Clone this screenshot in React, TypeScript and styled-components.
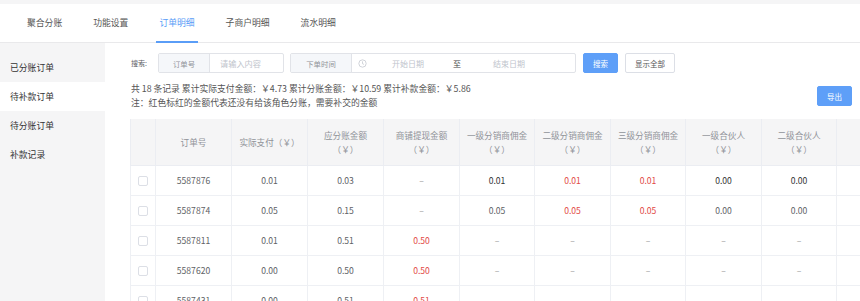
import React from "react";
import styled, { createGlobalStyle } from "styled-components";

const Global = createGlobalStyle`
  html, body { margin: 0; padding: 0; background: #fff; overflow: hidden; }
  body { font-family: "Noto Sans CJK SC", "Noto Sans", sans-serif; color: #606266; }
  * { box-sizing: border-box; }
`;

const Page = styled.div`
  width: 860px;
  height: 301px;
  display: flex;
  flex-direction: column;
  border-top: 4px solid #f5f5f6;
  overflow: hidden;
`;

const TabBar = styled.div`
  height: 39px;
  display: flex;
  align-items: stretch;
  padding-left: 27px;
  gap: 31px;
  border-bottom: 1px solid #e9e9eb;
  flex-shrink: 0;
`;

const Tab = styled.div<{ $active?: boolean }>`
  position: relative;
  display: flex;
  align-items: center;
  font-size: 8.8px;
  color: ${(p) => (p.$active ? "#5a9df7" : "#555")};
  padding-bottom: 1px;
  &::after {
    content: "";
    position: absolute;
    left: -3px;
    right: -3px;
    bottom: -1px;
    height: 2px;
    background: ${(p) => (p.$active ? "#5a9df7" : "transparent")};
  }
`;

const Body = styled.div`
  flex: 1;
  display: flex;
  min-height: 0;
`;

const Sidebar = styled.div`
  width: 105px;
  flex-shrink: 0;
  background: #f5f5f6;
  padding-top: 10px;
  display: flex;
  flex-direction: column;
`;

const SideItem = styled.div<{ $active?: boolean }>`
  height: 29px;
  display: flex;
  align-items: center;
  padding-left: 10px;
  font-size: 8.8px;
  color: #333;
  background: ${(p) => (p.$active ? "#fff" : "transparent")};
`;

const Main = styled.div`
  flex: 1;
  min-width: 0;
  padding: 10px 8px 0 25px;
  display: flex;
  flex-direction: column;
`;

const SearchRow = styled.div`
  display: flex;
  align-items: center;
  height: 20px;
`;

const SearchLabel = styled.span`
  font-size: 7px;
  color: #606266;
  width: 28px;
  padding-left: 1px;
`;

const InputGroup = styled.div<{ $w: number; $ml?: number }>`
  width: ${(p) => p.$w}px;
  margin-left: ${(p) => p.$ml || 0}px;
  height: 20px;
  display: flex;
  border: 1px solid #e1e3e8;
  border-radius: 2px;
  overflow: hidden;
`;

const Prepend = styled.div<{ $w: number }>`
  width: ${(p) => p.$w}px;
  flex-shrink: 0;
  background: #f5f7fa;
  border-right: 1px solid #e1e3e8;
  display: flex;
  align-items: center;
  justify-content: center;
  font-size: 7.4px;
  color: #909399;
`;

const Placeholder = styled.div`
  display: flex;
  align-items: center;
  padding-left: 10px;
  font-size: 8.2px;
  color: #c0c4cc;
`;

const RangeBox = styled.div`
  flex: 1;
  display: flex;
  align-items: center;
  padding-left: 6px;
`;

const RangeField = styled.div<{ $w: number }>`
  width: ${(p) => p.$w}px;
  text-align: center;
  font-size: 8px;
  color: #c0c4cc;
`;

const RangeSep = styled.div`
  width: 16px;
  text-align: center;
  font-size: 8px;
  color: #444;
`;

const Button = styled.button<{ $primary?: boolean; $w: number; $ml?: number }>`
  width: ${(p) => p.$w}px;
  height: 20px;
  margin-left: ${(p) => p.$ml || 0}px;
  padding: 0;
  border-radius: 2px;
  font-family: inherit;
  font-size: 7.5px;
  cursor: pointer;
  border: 1px solid ${(p) => (p.$primary ? "#5e9ff8" : "#dcdfe6")};
  background: ${(p) => (p.$primary ? "#5e9ff8" : "#fff")};
  color: ${(p) => (p.$primary ? "#fff" : "#555")};
`;

const SummaryRow = styled.div`
  display: flex;
  align-items: center;
  justify-content: space-between;
  margin-top: 9px;
  padding-left: 1px;
`;

const SummaryText = styled.div`
  font-size: 8.8px;
  line-height: 14px;
  color: #555;
`;

const TableWrap = styled.div`
  margin-top: 9px;
  margin-right: -8px;
  overflow: hidden;
`;

const Table = styled.table`
  border-collapse: collapse;
  table-layout: fixed;
  width: 786px;
`;

const Th = styled.th`
  background: #f5f5f6;
  height: 46px;
  padding: 0;
  font-weight: normal;
  font-size: 8.6px;
  line-height: 14px;
  color: #909399;
  text-align: center;
  border: 1px solid #ebedf2;
  border-top: none;
`;

const Unit = styled.span`
  display: block;
`;

const Td = styled.td<{ $red?: boolean; $dash?: boolean; $dark?: boolean }>`
  height: 30px;
  padding: 0;
  text-align: center;
  font-size: 8.6px;
  border: 1px solid #eef0f4;
  color: ${(p) => (p.$red ? "#e24a45" : p.$dash ? "#999" : p.$dark ? "#333" : "#606266")};
`;

const Check = styled.span`
  display: inline-block;
  width: 10px;
  height: 10px;
  border: 1px solid #dcdfe6;
  border-radius: 2px;
  background: #fff;
  vertical-align: middle;
`;

const ClockIcon = () => (
  <svg width="9" height="9" viewBox="0 0 16 16" fill="none" stroke="#c0c4cc" strokeWidth="1.3">
    <circle cx="8" cy="8" r="6.5" />
    <path d="M8 4.2V8.3L10.6 9.6" />
  </svg>
);

const widths = [25, 76, 76, 76, 76, 75, 76, 75, 76, 75, 80];

const headers: { label: string; unit?: boolean }[] = [
  { label: "" },
  { label: "订单号" },
  { label: "实际支付（￥）" },
  { label: "应分账金额", unit: true },
  { label: "商铺提现金额", unit: true },
  { label: "一级分销商佣金", unit: true },
  { label: "二级分销商佣金", unit: true },
  { label: "三级分销商佣金", unit: true },
  { label: "一级合伙人", unit: true },
  { label: "二级合伙人", unit: true },
  { label: "" },
];

type Cell = { v: string; red?: boolean; dark?: boolean };
const c = (v: string, red?: boolean): Cell => ({ v, red, dark: !red && v !== "–" && false });

const rows: Cell[][] = [
  [c("5587876"), c("0.01"), c("0.03"), c("–"), { v: "0.01", dark: true }, c("0.01", true), c("0.01", true), { v: "0.00", dark: true }, { v: "0.00", dark: true }, c("")],
  [c("5587874"), c("0.05"), c("0.15"), c("–"), c("0.05"), c("0.05", true), c("0.05", true), c("0.00"), c("0.00"), c("")],
  [c("5587811"), c("0.01"), c("0.51"), c("0.50", true), c("–"), c("–"), c("–"), c("–"), c("–"), c("")],
  [c("5587620"), c("0.00"), c("0.50"), c("0.50", true), c("–"), c("–"), c("–"), c("–"), c("–"), c("")],
  [c("5587431"), c("0.00"), c("0.51"), c("0.51", true), c(""), c(""), c(""), c(""), c(""), c("")],
];

export default function App() {
  return (
    <>
      <Global />
      <Page>
        <TabBar>
          <Tab>聚合分账</Tab>
          <Tab>功能设置</Tab>
          <Tab $active>订单明细</Tab>
          <Tab>子商户明细</Tab>
          <Tab>流水明细</Tab>
        </TabBar>
        <Body>
          <Sidebar>
            <SideItem>已分账订单</SideItem>
            <SideItem $active>待补款订单</SideItem>
            <SideItem>待分账订单</SideItem>
            <SideItem>补款记录</SideItem>
          </Sidebar>
          <Main>
            <SearchRow>
              <SearchLabel>搜索:</SearchLabel>
              <InputGroup $w={126}>
                <Prepend $w={51}>订单号</Prepend>
                <Placeholder>请输入内容</Placeholder>
              </InputGroup>
              <InputGroup $w={286} $ml={6}>
                <Prepend $w={61}>下单时间</Prepend>
                <RangeBox>
                  <ClockIcon />
                  <RangeField $w={82}>开始日期</RangeField>
                  <RangeSep>至</RangeSep>
                  <RangeField $w={88}>结束日期</RangeField>
                </RangeBox>
              </InputGroup>
              <Button $primary $w={35} $ml={7}>搜索</Button>
              <Button $w={50} $ml={7}>显示全部</Button>
            </SearchRow>
            <SummaryRow>
              <SummaryText>
                共 18 条记录 累计实际支付金额：￥4.73 累计分账金额：￥10.59 累计补款金额：￥5.86
                <br />
                注：红色标红的金额代表还没有给该角色分账，需要补交的金额
              </SummaryText>
              <Button $primary $w={35}>导出</Button>
            </SummaryRow>
            <TableWrap>
              <Table>
                <colgroup>
                  {widths.map((w, i) => (
                    <col key={i} style={{ width: w }} />
                  ))}
                </colgroup>
                <thead>
                  <tr>
                    {headers.map((h, i) => (
                      <Th key={i}>
                        {h.label}
                        {h.unit && <Unit>（￥）</Unit>}
                      </Th>
                    ))}
                  </tr>
                </thead>
                <tbody>
                  {rows.map((r, i) => (
                    <tr key={i}>
                      <Td>
                        <Check />
                      </Td>
                      {r.map((cell, j) => (
                        <Td key={j} $red={cell.red} $dash={cell.v === "–"} $dark={cell.dark}>
                          {cell.v}
                        </Td>
                      ))}
                    </tr>
                  ))}
                </tbody>
              </Table>
            </TableWrap>
          </Main>
        </Body>
      </Page>
    </>
  );
}
